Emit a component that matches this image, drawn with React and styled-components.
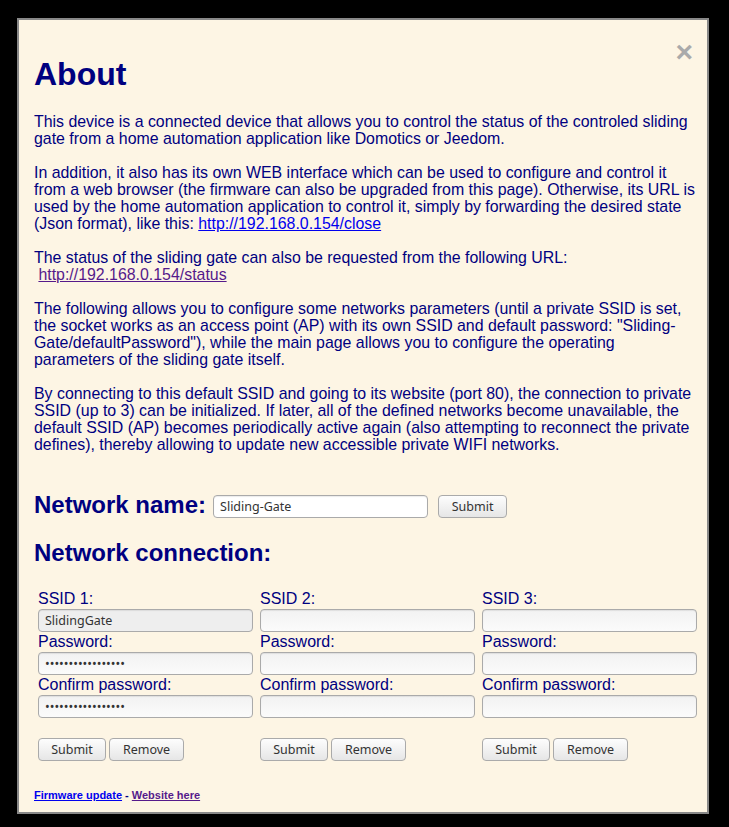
import React from 'react';
import styled, { createGlobalStyle } from 'styled-components';

const Global = createGlobalStyle`
  html, body {
    margin: 0;
    background: #000;
    height: 100%;
  }
  body {
    font-family: "Liberation Sans", Arial, sans-serif;
  }
`;

const Overlay = styled.div`
  padding: 18px 20px 14px 17px;
`;

const Panel = styled.div`
  position: relative;
  background: #fdf5e4;
  border: 2px solid #888;
  padding: 0 11px 10px 15px;
  color: #000080;
`;

const Close = styled.span`
  position: absolute;
  top: 17px;
  right: 14px;
  font-size: 30px;
  line-height: 30px;
  font-weight: bold;
  color: #aaa;
  cursor: pointer;
`;

const Title = styled.h1`
  font-size: 32px;
  line-height: 37px;
  margin: 36px 0 20px 0;
  font-weight: bold;
  color: #000080;
`;

const Text = styled.div`
  font-size: 15.9px;
  line-height: 17px;
`;

const Link = styled.a`
  color: ${p => (p.visited ? '#551a8b' : '#0000ee')};
  text-decoration: underline;
`;

const NameRow = styled.div`
  display: flex;
  align-items: flex-start;
  margin-top: 38px;
`;

const Heading = styled.h2`
  font-size: 24px;
  line-height: 28px;
  font-weight: bold;
  margin: 0;
  color: #000080;
`;

const ConnHeading = styled(Heading)`
  margin-top: 20px;
`;

const Field = styled.input`
  box-sizing: border-box;
  width: 215px;
  height: 23px;
  padding: 0 6px;
  border: 1px solid #aaa;
  border-radius: 4px;
  background: ${p => (p.disabled ? '#eeeeee' : 'linear-gradient(#f2f2f2, #fbfbfb)')};
  box-shadow: inset 0 1px 1px rgba(0, 0, 0, 0.08);
  font-family: "Noto Sans", "DejaVu Sans", sans-serif;
  font-size: 12.5px;
  color: #333;
  outline: none;
`;

const NameField = styled(Field)`
  margin: 4px 10px 0 7px;
  background: #fff;
`;

const Button = styled.button`
  box-sizing: border-box;
  height: 23px;
  width: ${p => p.w}px;
  padding: 0;
  border: 1px solid #aaa;
  border-radius: 4px;
  background: linear-gradient(#fdfdfd, #e6e6e6);
  font-family: "Noto Sans", "DejaVu Sans", sans-serif;
  font-size: 12.5px;
  color: #333;
  cursor: pointer;
`;

const NameButton = styled(Button)`
  margin-top: 4px;
`;

const Grid = styled.div`
  display: grid;
  grid-template-columns: repeat(3, 215px);
  column-gap: 7px;
  margin: 22px 0 0 4px;
`;

const Column = styled.div`
  display: flex;
  flex-direction: column;
`;

const Label = styled.label`
  font-size: 16px;
  line-height: 20px;
`;

const Buttons = styled.div`
  display: flex;
  gap: 3px;
  margin-top: 20px;
`;

const Footer = styled.div`
  margin-top: 28px;
  font-size: 11px;
  line-height: 13px;
  font-weight: bold;
`;

const networks = [
  { n: 1, ssid: 'SlidingGate', pass: 'xxxxxxxxxxxxxxxxx', locked: true },
  { n: 2, ssid: '', pass: '' },
  { n: 3, ssid: '', pass: '' },
];

export default function App() {
  return (
    <Overlay>
      <Global />
      <Panel>
        <Close>×</Close>
        <Title>About</Title>
        <Text>
          This device is a connected device that allows you to control the status of the controled sliding gate from a home automation application like Domotics or Jeedom.
          <br /><br />
          In addition, it also has its own WEB interface which can be used to configure and control it from a web browser (the firmware can also be upgraded from this page). Otherwise, its URL is used by the home automation application to control it, simply by forwarding the desired state (Json format), like this: <Link href="#">http://192.168.0.154/close</Link>
          <br /><br />
          The status of the sliding gate can also be requested from the following URL:
          <br />
          &nbsp;<Link visited href="#">http://192.168.0.154/status</Link>
          <br /><br />
          The following allows you to configure some networks parameters (until a private SSID is set, the socket works as an access point (AP) with its own SSID and default password: "Sliding-Gate/defaultPassword"), while the main page allows you to configure the operating parameters of the sliding gate itself.
          <br /><br />
          By connecting to this default SSID and going to its website (port 80), the connection to private SSID (up to 3) can be initialized. If later, all of the defined networks become unavailable, the default SSID (AP) becomes periodically active again (also attempting to reconnect the private defines), thereby allowing to update new accessible private WIFI networks.
        </Text>

        <NameRow>
          <Heading>Network name:</Heading>
          <NameField defaultValue="Sliding-Gate" />
          <NameButton w={69}>Submit</NameButton>
        </NameRow>

        <ConnHeading>Network connection:</ConnHeading>
        <Grid>
          {networks.map(net => (
            <Column key={net.n}>
              <Label>SSID {net.n}:</Label>
              <Field defaultValue={net.ssid} disabled={net.locked} />
              <Label>Password:</Label>
              <Field type="password" defaultValue={net.pass} />
              <Label>Confirm password:</Label>
              <Field type="password" defaultValue={net.pass} />
              <Buttons>
                <Button w={68}>Submit</Button>
                <Button w={75}>Remove</Button>
              </Buttons>
            </Column>
          ))}
        </Grid>

        <Footer>
          <Link href="#">Firmware update</Link> - <Link visited href="#">Website here</Link>
        </Footer>
      </Panel>
    </Overlay>
  );
}
